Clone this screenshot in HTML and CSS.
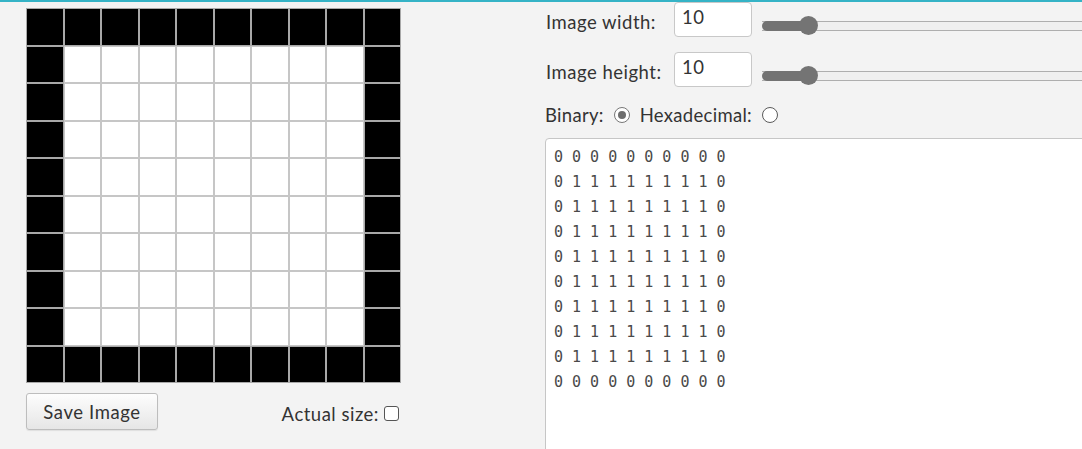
FILE: index.html
```html
<!DOCTYPE html>
<html lang="en">
<head>
  <meta charset="UTF-8" />
  <title>Bitmap Editor</title>
  <link rel="stylesheet" href="styles.css">
</head>
<body>
  <div class="app">
    <div class="left">
      <div class="grid" id="grid"></div>
      <div class="bottom-bar">
        <button class="btn">Save Image</button>
        <label class="check-label">Actual size: <span class="checkbox"></span></label>
      </div>
    </div>

    <div class="right">
      <div class="field-row">
        <span class="label">Image width:</span>
        <div class="input">10</div>
        <div class="slider">
          <div class="track"><div class="fill"></div></div>
          <div class="thumb"></div>
        </div>
      </div>
      <div class="field-row">
        <span class="label">Image height:</span>
        <div class="input">10</div>
        <div class="slider">
          <div class="track"><div class="fill"></div></div>
          <div class="thumb"></div>
        </div>
      </div>
      <div class="mode-row">
        <span>Binary:</span>
        <span class="radio selected"></span>
        <span>Hexadecimal:</span>
        <span class="radio"></span>
      </div>
      <div class="output" id="output"></div>
    </div>
  </div>

  <script>
    const size = 10;
    const grid = document.getElementById('grid');
    const out = document.getElementById('output');
    let lines = [];

    for (let y = 0; y < size; y++) {
      let row = [];
      for (let x = 0; x < size; x++) {
        const edge = x === 0 || y === 0 || x === size - 1 || y === size - 1;
        const cell = document.createElement('div');
        cell.className = edge ? 'cell on' : 'cell';
        grid.appendChild(cell);
        row.push(edge ? '0' : '1');
      }
      lines.push(row.join(' '));
    }

    out.textContent = lines.join('\n');
  </script>
</body>
</html>
```

FILE: styles.css
```css
* { box-sizing: border-box; }
body {
  margin: 0;
  background: #f3f3f3;
  border-top: 2px solid #35b3c6;
  font-family: Lato, "Open Sans", sans-serif;
  font-size: 18.5px;
  letter-spacing: 0.5px;
  color: #333;
  height: 100vh;
  overflow: hidden;
}
.app {
  display: flex;
  gap: 144px;
  padding-left: 26px;
}
.left {
  padding-top: 6px;
  width: 375px;
  flex: none;
}
.grid {
  width: 375px;
  height: 375px;
  display: grid;
  grid-template-columns: repeat(10, 1fr);
  grid-template-rows: repeat(10, 1fr);
}
.cell {
  background: #fff;
  border: 1px solid #c6c6c6;
}
.cell.on {
  background: #000;
  border-color: #a8a8a8;
}
.bottom-bar {
  display: flex;
  justify-content: space-between;
  align-items: center;
  margin-top: 10px;
}
.btn {
  font: inherit;
  letter-spacing: 0.6px;
  color: #333;
  width: 132px;
  height: 37px;
  border: 1px solid #bdbdbd;
  border-radius: 3px;
  background: linear-gradient(#fdfdfd, #e6e6e6);
  box-shadow: 0 1px 1px rgba(0,0,0,0.08);
  padding: 0;
}
.check-label {
  display: flex;
  align-items: center;
  gap: 5px;
  padding-right: 2px;
  padding-top: 4px;
}
.checkbox {
  width: 15px;
  height: 15px;
  border: 1px solid #555;
  border-radius: 3px;
  background: #fff;
}

.right {
  width: 600px;
  flex: none;
}
.field-row {
  display: flex;
  align-items: center;
  height: 35px;
  margin-bottom: 15px;
}
.label {
  width: 129px;
  padding-left: 1px;
  padding-top: 4px;
  flex: none;
}
.input {
  width: 78px;
  height: 35px;
  flex: none;
  background: #fff;
  border: 1px solid #c8c8c8;
  border-radius: 4px;
  padding: 2px 7px;
  line-height: 24px;
}
.slider {
  position: relative;
  flex: 1;
  height: 20px;
  align-self: flex-start;
  margin-top: 14px;
  margin-left: 10px;
}
.track {
  position: absolute;
  left: 0;
  right: 0;
  top: 5px;
  height: 10px;
  background: #efefef;
  border-top: 1px solid #aeaeae;
  border-bottom: 1px solid #aeaeae;
}
.fill {
  width: 47px;
  height: 10px;
  margin-top: -1px;
  background: #737373;
  border-radius: 5px 0 0 5px;
}
.thumb {
  position: absolute;
  left: 37px;
  top: 0;
  width: 19px;
  height: 19px;
  border-radius: 50%;
  background: #747474;
}
.mode-row {
  display: flex;
  align-items: center;
  gap: 10px;
  height: 24px;
  padding-top: 2px;
  letter-spacing: 0.3px;
}
.radio {
  width: 16px;
  height: 16px;
  border: 1px solid #5a5a5a;
  border-radius: 50%;
  background: #fff;
  display: flex;
  align-items: center;
  justify-content: center;
}
.radio.selected { border-color: #777; }
.radio.selected::after {
  content: "";
  width: 8px;
  height: 8px;
  border-radius: 50%;
  background: #6e6e6e;
}
.output {
  margin-top: 12px;
  height: 330px;
  background: #fff;
  border: 1px solid #c6c6c6;
  border-radius: 4px 0 0 0;
  padding: 6px 8px;
  font-family: "DejaVu Sans Mono", "Liberation Mono", monospace;
  font-size: 15px;
  letter-spacing: 0;
  line-height: 25px;
  color: #4a4a4a;
  white-space: pre;
}
```
